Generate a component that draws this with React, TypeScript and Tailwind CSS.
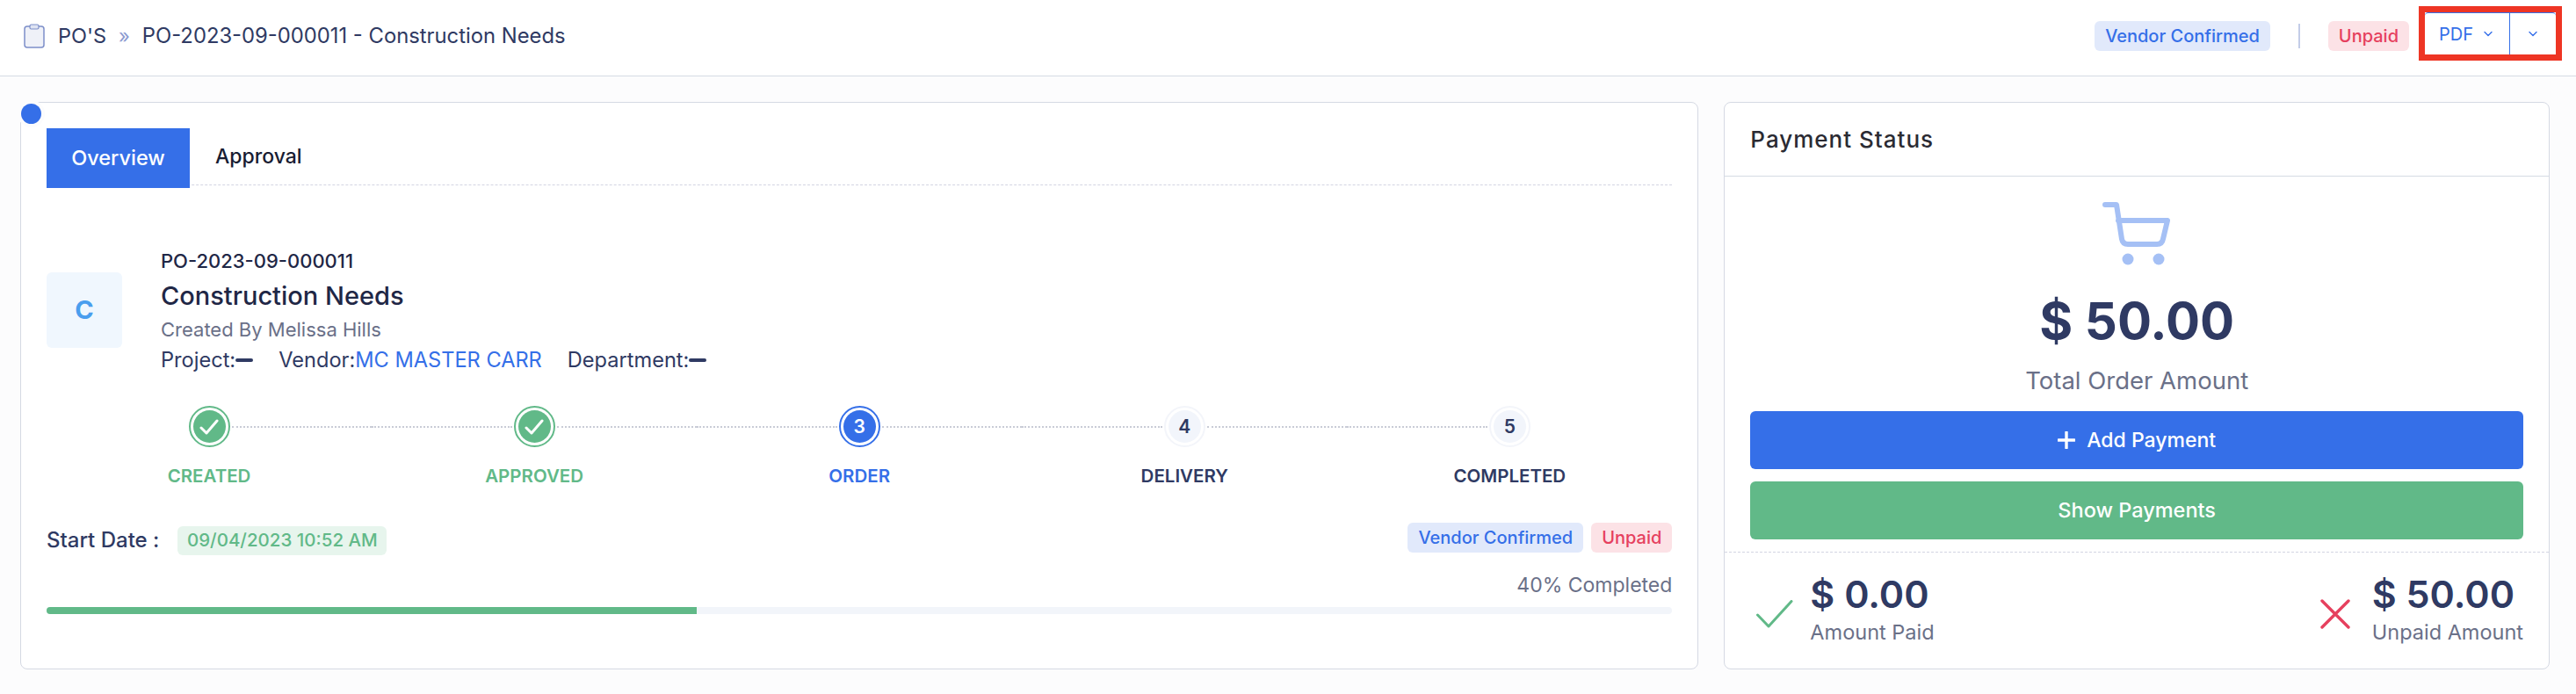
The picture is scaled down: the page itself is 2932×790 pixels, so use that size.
import React from "react";

const font = { fontFamily: "Inter, 'Liberation Sans', sans-serif" };

function Chevron({ className }: { className?: string }) {
  return (
    <svg width="10" height="7" viewBox="0 0 10 7" fill="none" className={className}>
      <path d="M1 1.5 L5 5.5 L9 1.5" stroke="#356fe8" strokeWidth="1.4" strokeLinecap="round" strokeLinejoin="round" />
    </svg>
  );
}

function Badge({ tone, children }: { tone: "blue" | "red"; children: React.ReactNode }) {
  const cls = tone === "blue" ? "bg-[#e1e9fb] text-[#356fe8]" : "bg-[#fce2e6] text-[#e6405e]";
  return (
    <span className={`flex h-[34px] items-center justify-center rounded-[6px] px-[12px] text-[20px] font-medium ${cls}`}>
      {children}
    </span>
  );
}

type StepState = "done" | "active" | "todo";

function Step({ n, label, state, first, last }: { n: number; label: string; state: StepState; first?: boolean; last?: boolean }) {
  const ring = state === "done" ? "border-[#61b988]" : state === "active" ? "border-[#356fe8]" : "border-[#f3f5fa]";
  const fill =
    state === "done"
      ? "bg-[#61b988] text-white"
      : state === "active"
        ? "bg-[#356fe8] text-white"
        : "bg-[#f2f5fb] text-[#2f3a63]";
  const text = state === "done" ? "text-[#61b988]" : state === "active" ? "text-[#356fe8]" : "text-[#2f3a63]";
  return (
    <div className="flex flex-col items-center">
      <div className="flex w-full items-center">
        <div className={`h-0 flex-1 border-t-2 border-dotted ${first ? "border-transparent" : "border-[#c9ccd6]"}`} />
        <div className={`mx-[2px] flex h-[47px] w-[47px] items-center justify-center rounded-full border-2 bg-white p-[3px] ${ring}`}>
          <div className={`flex h-full w-full items-center justify-center rounded-full text-[21px] font-semibold ${fill}`}>
            {state === "done" ? (
              <svg width="22" height="18" viewBox="0 0 22 18" fill="none">
                <path d="M2 10 L8 16 L20 2" stroke="white" strokeWidth="3" strokeLinecap="round" strokeLinejoin="round" />
              </svg>
            ) : (
              n
            )}
          </div>
        </div>
        <div className={`h-0 flex-1 border-t-2 border-dotted ${last ? "border-transparent" : "border-[#c9ccd6]"}`} />
      </div>
      <div className={`mt-[17px] text-[20.5px] font-semibold leading-[32px] ${text}`}>{label}</div>
    </div>
  );
}

export default function App() {
  return (
    <div style={font} className="min-h-[790px] bg-[#fcfcfd] text-[#2f3a63]">
      <header className="flex h-[87px] items-center border-b border-[#d5dbe4] bg-white pb-[4px] pl-[27px] pr-[16px]">
        <svg width="24" height="28" viewBox="0 0 24 28" fill="none">
          <rect x="1" y="3" width="22" height="24" rx="3" fill="#eff1f8" stroke="#7d8fc9" strokeWidth="1.5" />
          <rect x="7" y="1" width="10" height="5" rx="1.5" fill="#dfe4f3" stroke="#7d8fc9" strokeWidth="1.2" />
        </svg>
        <span className="ml-[15px] w-[54px] text-[23.5px] leading-none">PO'S</span>
        <span className="ml-[15px] text-[22px] leading-none text-[#8b9ad0]">»</span>
        <span className="ml-[14px] text-[23.8px] leading-none">PO-2023-09-000011 - Construction Needs</span>
        <div className="ml-auto flex items-center">
          <Badge tone="blue">Vendor Confirmed</Badge>
          <div className="mx-[32px] h-[28px] w-[2px] bg-[#c3cde8]" />
          <Badge tone="red">Unpaid</Badge>
          <div className="mb-[6px] ml-[11px] flex h-[62px] w-[163px] border-[7px] border-[#ee3524]">
            <div className="flex flex-1 rounded-t-[4px] border-t border-[#356fe8] bg-white">
              <div className="flex w-[97px] items-center gap-[12px] border-r border-[#356fe8] pl-[16px] text-[20px] text-[#356fe8]">
                PDF
                <Chevron />
              </div>
              <div className="flex flex-1 items-center justify-center">
                <Chevron />
              </div>
            </div>
          </div>
        </div>
      </header>

      <main className="flex gap-[29px] pl-[23px] pr-[30px] pt-[29px]">
        <section className="relative h-[646px] w-[1911px] rounded-[8px] border border-[#d5d9e3] bg-white px-[29px] pt-[29px]">
          <div className="absolute left-[-4px] top-[-3px] flex h-[31px] w-[31px] items-center justify-center rounded-full bg-[#fcfcfd]">
            <div className="h-[23px] w-[23px] rounded-full bg-[#356fe8]" />
          </div>

          <div className="flex h-[65px] items-start border-b border-dashed border-[#d3d5e2]">
            <div className="flex h-[68px] w-[163px] items-center justify-center bg-[#356fe8] text-[23.5px] font-medium text-white">
              Overview
            </div>
            <div className="ml-[29px] flex h-[64px] items-center text-[23px] font-medium text-[#181c32]">Approval</div>
          </div>

          <div className="mt-[72px] flex">
            <div className="mt-[27px] flex h-[86px] w-[86px] items-center justify-center rounded-[6px] bg-[#f0f7fe] text-[29px] font-bold text-[#4a9eee]">
              C
            </div>
            <div className="ml-[44px] flex flex-col">
              <div className="text-[22px] font-medium leading-[28px] text-[#1f2746]">PO-2023-09-000011</div>
              <div className="mt-[6px] text-[29px] font-medium leading-[40px] text-[#1f2746]">Construction Needs</div>
              <div className="mt-[4px] text-[22px] leading-[28px] text-[#6a7088]">Created By Melissa Hills</div>
              <div className="mt-[7px] flex text-[23.6px] leading-[28px]">
                <span className="flex items-center">
                  Project:
                  <span className="h-[4px] w-[20px] rounded-full bg-[#2f3a63]" />
                </span>
                <span className="ml-[29px]">
                  Vendor:<span className="text-[#356fe8]">MC MASTER CARR</span>
                </span>
                <span className="ml-[29px] flex items-center">
                  Department:
                  <span className="h-[4px] w-[20px] rounded-full bg-[#2f3a63]" />
                </span>
              </div>
            </div>
          </div>

          <div className="mt-[38px] grid grid-cols-5">
            <Step n={1} label="CREATED" state="done" first />
            <Step n={2} label="APPROVED" state="done" />
            <Step n={3} label="ORDER" state="active" />
            <Step n={4} label="DELIVERY" state="todo" />
            <Step n={5} label="COMPLETED" state="todo" last />
          </div>

          <div className="mt-[33px] flex items-center justify-between">
            <div className="mt-[6px] flex items-center">
              <span className="text-[24px] font-medium">Start Date :</span>
              <span className="ml-[21px] flex h-[33px] w-[238px] items-center justify-center rounded-[6px] bg-[#e7f5ed] text-[20.5px] font-medium text-[#61b988]">
                09/04/2023 10:52 AM
              </span>
            </div>
            <div className="flex gap-[9px]">
              <Badge tone="blue">Vendor Confirmed</Badge>
              <Badge tone="red">Unpaid</Badge>
            </div>
          </div>

          <div className="mt-[19px] text-right text-[23px] leading-[28px] text-[#6a7088]">40% Completed</div>
          <div className="mt-[11px] h-[8px] w-full overflow-hidden rounded-[4px] bg-[#f2f5fa]">
            <div className="h-full w-[40%] bg-[#61b988]" />
          </div>
        </section>

        <aside className="flex h-[646px] w-[940px] flex-col rounded-[8px] border border-[#d5d9e3] bg-white">
          <div className="flex h-[84px] items-center border-b border-[#d5dbe4] px-[29px] text-[26px] font-medium tracking-[1px] text-[#2b2b33]">
            Payment Status
          </div>
          <div className="flex flex-col items-center px-[29px] pt-[29px]">
            <svg width="78" height="72" viewBox="0 0 78 72" fill="none">
              <path d="M3 3 H16 L22 42 Q23 48 29 48 H62 Q68 48 69 42 L74 21 H18" stroke="#a5c0f5" strokeWidth="6" strokeLinecap="round" strokeLinejoin="round" />
              <circle cx="29" cy="65" r="6.5" fill="#a5c0f5" />
              <circle cx="64" cy="65" r="6.5" fill="#a5c0f5" />
            </svg>
            <div className="mt-[28px] text-[58px] font-bold leading-[70px]">$ 50.00</div>
            <div className="mt-[17px] text-[27.5px] leading-[32px] text-[#6a7088]">Total Order Amount</div>
            <button className="mt-[19px] flex h-[66px] w-full items-center justify-center gap-[13px] rounded-[6px] bg-[#356fe8] text-[23px] font-medium text-white">
              <svg width="20" height="20" viewBox="0 0 20 20" fill="none">
                <path d="M10 1 V19 M1 10 H19" stroke="white" strokeWidth="3.4" strokeLinecap="round" />
              </svg>
              Add Payment
            </button>
            <button className="mt-[14px] flex h-[66px] w-full items-center justify-center rounded-[6px] bg-[#61b988] text-[23.5px] font-medium text-white">
              Show Payments
            </button>
          </div>
          <div className="mt-[14px] flex items-center justify-between border-t border-dashed border-[#d3d5e2] pl-[36px] pr-[29px] pt-[22px]">
            <div className="flex items-center">
              <svg width="42" height="32" viewBox="0 0 42 32" fill="none" className="mt-[12px]">
                <path d="M1.5 17 L14 30 L40 1.5" stroke="#61b988" strokeWidth="3" strokeLinecap="round" strokeLinejoin="round" />
              </svg>
              <div className="ml-[19px] flex flex-col">
                <div className="text-[43px] font-semibold leading-[50px]">$ 0.00</div>
                <div className="mt-[4px] text-[23.5px] leading-[30px] text-[#6a7088]">Amount Paid</div>
              </div>
            </div>
            <div className="flex items-center">
              <svg width="34" height="34" viewBox="0 0 34 34" fill="none" className="mt-[12px]">
                <path d="M2 2 L32 32 M32 2 L2 32" stroke="#e6405e" strokeWidth="3.4" strokeLinecap="round" />
              </svg>
              <div className="ml-[25px] flex flex-col">
                <div className="text-[43px] font-semibold leading-[50px]">$ 50.00</div>
                <div className="mt-[4px] text-[23.5px] leading-[30px] text-[#6a7088]">Unpaid Amount</div>
              </div>
            </div>
          </div>
        </aside>
      </main>
    </div>
  );
}
